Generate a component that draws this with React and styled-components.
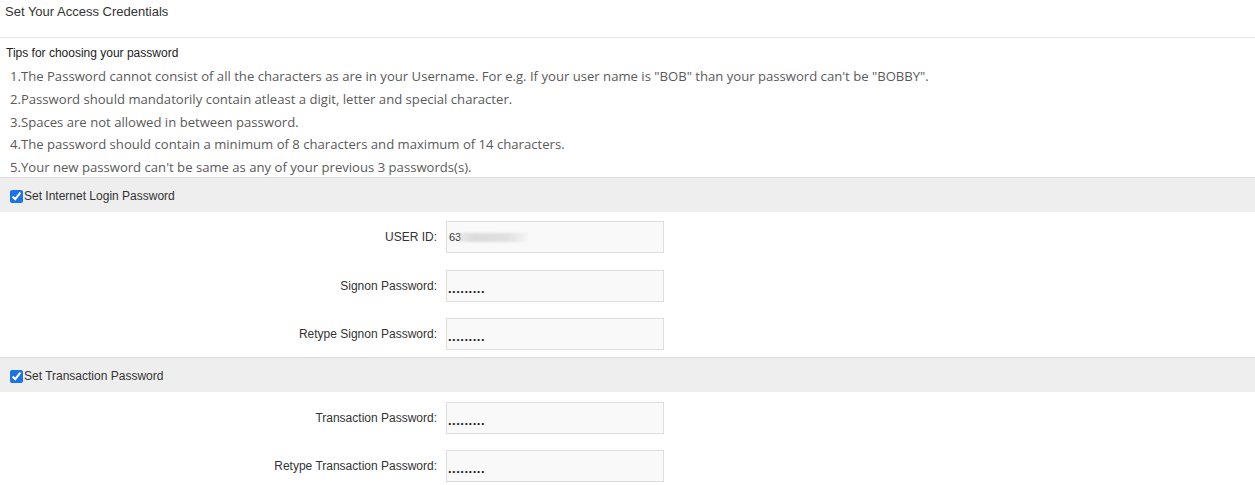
import React from 'react';
import styled, { createGlobalStyle } from 'styled-components';

const GlobalStyle = createGlobalStyle`
  html, body {
    margin: 0;
    padding: 0;
    background: #fff;
    font-family: "Liberation Sans", Arial, sans-serif;
  }
`;

const Page = styled.div`
  width: 1255px;
  height: 485px;
  overflow: hidden;
  background: #fff;
`;

const Header = styled.div`
  height: 38px;
  box-sizing: border-box;
  padding: 4px 5px 0;
  font-size: 13px;
  line-height: 16px;
  color: #333;
  border-bottom: 1px solid #e6e6e6;
`;

const Tips = styled.div`
  padding: 8px 0 0 6px;
  height: 139px;
  box-sizing: border-box;
`;

const TipsTitle = styled.div`
  font-size: 12px;
  line-height: 14px;
  color: #222;
`;

const TipList = styled.div`
  padding: 5px 0 0 4px;
  font-family: "Open Sans", sans-serif;
  font-size: 13.12px;
  line-height: 22.8px;
  color: #5a5a5a;
`;

const Band = styled.div`
  display: flex;
  align-items: center;
  height: 35px;
  box-sizing: border-box;
  padding: 2px 0 0 6px;
  background: #eeeeee;
  border-top: 1px solid #dcdcdc;
  font-size: 12px;
  color: #333;
`;

const Check = styled.input`
  margin: 0 1px 0 4px;
  width: 13px;
  height: 13px;
  accent-color: #1a73e8;
`;

const Form = styled.div`
  display: flex;
  flex-direction: column;
  gap: ${(p) => p.$gap || 16.5}px;
  padding: ${(p) => p.$top || 9}px 0 ${(p) => p.$bottom || 7}px;
`;

const Row = styled.div`
  display: grid;
  grid-template-columns: 437px 218px;
  column-gap: 9px;
  align-items: center;
`;

const Label = styled.div`
  text-align: right;
  font-size: 12px;
  color: #333;
`;

const Field = styled.div`
  height: 32px;
  box-sizing: border-box;
  border: 1px solid #dedede;
  background: #f9f9f9;
  display: flex;
  align-items: center;
  padding-left: 1px;
`;

const Dots = styled.span`
  font-size: 13px;
  font-weight: bold;
  color: #222;
  letter-spacing: 0.5px;
  margin-top: 5px;
`;

const UserValue = styled.span`
  font-size: 11px;
  color: #333;
  margin-left: 1px;
`;

const Redact = styled.span`
  display: inline-block;
  width: 68px;
  height: 9px;
  margin-left: -1px;
  background: linear-gradient(
    to right,
    rgba(220, 220, 220, 0.6),
    #dcdcdc 20%,
    #e0e0e0 70%,
    rgba(240, 240, 240, 0.4)
  );
  filter: blur(1px);
`;

const tips = [
  '1.The Password cannot consist of all the characters as are in your Username. For e.g. If your user name is "BOB" than your password can\'t be "BOBBY".',
  '2.Password should mandatorily contain atleast a digit, letter and special character.',
  '3.Spaces are not allowed in between password.',
  '4.The password should contain a minimum of 8 characters and maximum of 14 characters.',
  "5.Your new password can't be same as any of your previous 3 passwords(s).",
];

function PasswordRow({ label }) {
  return (
    <Row>
      <Label>{label}</Label>
      <Field>
        <Dots>.........</Dots>
      </Field>
    </Row>
  );
}

export default function App() {
  return (
    <Page>
      <GlobalStyle />
      <Header>Set Your Access Credentials</Header>
      <Tips>
        <TipsTitle>Tips for choosing your password</TipsTitle>
        <TipList>
          {tips.map((t) => (
            <div key={t}>{t}</div>
          ))}
        </TipList>
      </Tips>

      <Band>
        <Check type="checkbox" checked readOnly />
        Set Internet Login Password
      </Band>
      <Form>
        <Row>
          <Label>USER ID:</Label>
          <Field>
            <UserValue>63</UserValue>
            <Redact />
          </Field>
        </Row>
        <PasswordRow label="Signon Password:" />
        <PasswordRow label="Retype Signon Password:" />
      </Form>

      <Band>
        <Check type="checkbox" checked readOnly />
        Set Transaction Password
      </Band>
      <Form $top={10} $gap={16} $bottom={2}>
        <PasswordRow label="Transaction Password:" />
        <PasswordRow label="Retype Transaction Password:" />
      </Form>
    </Page>
  );
}
